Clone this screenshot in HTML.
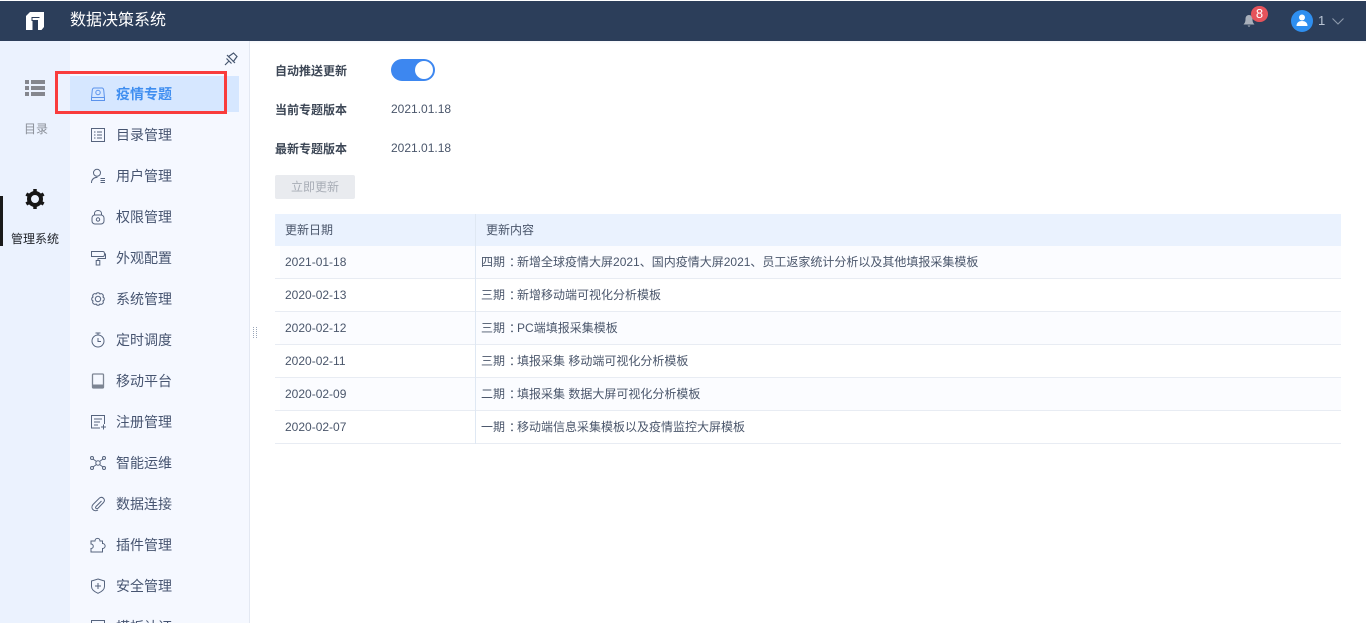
<!DOCTYPE html>
<html lang="zh"><head><meta charset="utf-8"><title>数据决策系统</title>
<style>
*{box-sizing:border-box}
html,body{margin:0;padding:0;width:1366px;height:623px;overflow:hidden;background:#fff}
#p{position:absolute;left:0;top:0;width:1366px;height:623px;overflow:hidden;background:#fff;font-family:"Liberation Sans","Noto Sans CJK SC","WenQuanYi Zen Hei",sans-serif;font-size:12px;color:#3d4d66}
.a{position:absolute;white-space:nowrap}
.m{position:absolute;left:116px;font-size:14px;line-height:20px;color:#465470;white-space:nowrap}
.ic{position:absolute;left:90px;width:16px;height:16px;fill:none;stroke:#56647e;stroke-width:1}
.d{position:absolute;left:285px;line-height:16px;color:#4a566b}
.t{position:absolute;left:481px;line-height:16px;color:#4a566b;white-space:nowrap}
.t span{display:inline-block;transform:translateX(4px)}
.l{position:absolute;left:275px;width:1066px;height:1px;background:#e8ecf3}
.r{position:absolute;left:280px;width:1061px;height:32px;background:#fbfcff}
</style></head><body><div id="p">
<div class="a" style="left:0;top:1px;width:1366px;height:40px;background:#2c3e5a"></div>
<svg class="a" style="left:26px;top:12px" width="18" height="18" viewBox="0 0 18 18"><path fill="#fff" d="M4 0H18V15L15.500 18H12V8H6.500V18H0V4Z"/><path fill="#2c3e5a" d="M5.500 5H13.500V6H6.500V9H5.500z"/></svg>
<div class="a" style="left:70px;top:10px;font-size:16px;line-height:22px;color:#fff">数据决策系统</div>
<svg class="a" style="left:1242px;top:14px" width="14" height="14" viewBox="0 0 14 14"><path fill="#a9b0bb" d="M7 1C4.500 1 3.500 3 3.500 5C3.500 8 2.800 9 1.500 10.500H12.500C11.200 9 10.500 8 10.500 5C10.500 3 9.500 1 7 1ZM5.500 11.500H8.500L7 13Z"/></svg>
<div class="a" style="left:1251px;top:6px;width:17px;height:16px;border-radius:8px;background:#e5535b;color:#fff;text-align:center;font-size:13px;line-height:16px">8</div>
<div class="a" style="left:1291px;top:10px;width:22px;height:22px;border-radius:50%;background:#2f8ff0"></div>
<svg class="a" style="left:1296px;top:14px" width="12" height="13" viewBox="0 0 12 13"><circle cx="6" cy="3.500" r="3" fill="#fff"/><path fill="#fff" d="M0.500 12C0.500 8.500 3 7 6 7S11.500 8.500 11.500 12Z"/></svg>
<div class="a" style="left:1318px;top:12px;font-size:13px;line-height:18px;color:#b9c4d4">1</div>
<svg class="a" style="left:1331px;top:17px" width="14" height="9" viewBox="0 0 14 9"><path d="M1.500 1.500L7 7L12.500 1.500" fill="none" stroke="#8d99ab" stroke-width="1.100"/></svg>

<div class="a" style="left:0;top:41px;width:70px;height:582px;background:#ebf2fe"></div>
<div class="a" style="left:70px;top:41px;width:180px;height:582px;background:#f5f8ff;border-right:1px solid #e3e8f2"></div>
<div class="a" style="left:250px;top:41px;width:1116px;height:3px;background:linear-gradient(#f6f7fa,rgba(255,255,255,0))"></div>

<svg class="a" style="left:25px;top:80px" width="20" height="17" viewBox="0 0 20 17"><path fill="#85878e" d="M0 1H4V5H0ZM6 1H20V5H6ZM0 7H4V11H0ZM6 7H20V11H6ZM0 13H4V17H0ZM6 13H20V17H6Z" transform="translate(0 -1)"/></svg>
<div class="a" style="left:24px;top:121px;line-height:16px;color:#8a8f98">目录</div>
<div class="a" style="left:0;top:196px;width:3px;height:50px;background:#1a1a1a"></div>
<svg class="a" style="left:25px;top:189px" width="20" height="20" viewBox="0 0 20 20"><circle cx="10" cy="10" r="6" fill="none" stroke="#161616" stroke-width="4"/><path stroke="#161616" stroke-width="3.500" d="M10 0V20M1.300 5L18.700 15M1.300 15L18.700 5" fill="none" stroke-dasharray="3.500 13 3.500"/></svg>
<div class="a" style="left:11px;top:231px;line-height:16px;color:#1e2127">管理系统</div>

<svg class="a" style="left:224px;top:52px" width="14" height="14" viewBox="0 0 14 14" fill="none" stroke="#45556f" stroke-width="1.200"><path d="M1 13L5 9M2.500 6.500L7.500 11.500M4 5L9.500 1L13 4.500L9 10M3 3L11 11"/></svg>

<div class="a" style="left:70px;top:76px;width:169px;height:36px;background:#d6e7ff"></div>
<div class="a" style="left:55px;top:71px;width:172px;height:43px;border:3px solid #f93c3c"></div>

<svg class="ic" style="top:86px;stroke:#5b93ec" viewBox="0 0 16 16"><path d="M4 2H12C13 2 13.500 3 13.700 4L14.500 12V14.500H1.500V12L2.300 4C2.500 3 3 2 4 2ZM1.500 11.500H14.500"/><circle cx="8" cy="6.500" r="2.200"/></svg>
<div class="m" style="top:84px;color:#3f8ef0;font-weight:bold">疫情专题</div>
<svg class="ic" style="top:127px" viewBox="0 0 16 16"><path d="M1.500 1.500H14.500V14.500H1.500ZM4 5H5.500M4 8H5.500M4 11H5.500M7 5H12M7 8H12M7 11H12"/></svg>
<div class="m" style="top:125px">目录管理</div>
<svg class="ic" style="top:168px" viewBox="0 0 16 16"><circle cx="7" cy="4.800" r="3.500"/><path d="M1.500 15C1.500 11 4 9.500 7.500 9.300M10.500 10.500H15M10.500 12.500H15M10.500 14.500H15"/></svg>
<div class="m" style="top:166px">用户管理</div>
<svg class="ic" style="top:209px" viewBox="0 0 16 16"><rect x="2" y="6" width="12" height="9" rx="3"/><path d="M4.500 6V4.500C4.500 .5 11.500 .5 11.500 4.500V6"/><circle cx="8" cy="10.500" r="1.700"/></svg>
<div class="m" style="top:207px">权限管理</div>
<svg class="ic" style="top:250px" viewBox="0 0 16 16"><path d="M1.500 1.500H13C15 1.500 15 6.500 13 6.500H1.500ZM15 4H15.500V8.500H8V10.500M6.200 10.500H9.800V15H6.200Z"/></svg>
<div class="m" style="top:248px">外观配置</div>
<svg class="ic" style="top:291px" viewBox="0 0 16 16"><path d="M13 6A2.200 2.200 0 0 1 13 10A2.200 2.200 0 0 1 10 13A2.200 2.200 0 0 1 6 13A2.200 2.200 0 0 1 3 10A2.200 2.200 0 0 1 3 6A2.200 2.200 0 0 1 6 3A2.200 2.200 0 0 1 10 3A2.200 2.200 0 0 1 13 6Z"/><circle cx="8" cy="8" r="2.700"/></svg>
<div class="m" style="top:289px">系统管理</div>
<svg class="ic" style="top:332px" viewBox="0 0 16 16"><circle cx="8" cy="9" r="6"/><path d="M5.500 1H10.500M8 1V3M8 6V9.500H11"/></svg>
<div class="m" style="top:330px">定时调度</div>
<svg class="ic" style="top:373px;stroke:#7d8593;stroke-width:1.300" viewBox="0 0 16 16"><rect x="2.500" y="1" width="11" height="14" rx="1"/><path d="M3 13H13" stroke-width="3"/></svg>
<div class="m" style="top:371px">移动平台</div>
<svg class="ic" style="top:414px" viewBox="0 0 16 16"><path d="M10 14H1.500V1.500H14.500V10M4 5H12M4 8H10M4 11H8M11 13H16M13.500 10.500V15.500"/></svg>
<div class="m" style="top:412px">注册管理</div>
<svg class="ic" style="top:455px" viewBox="0 0 16 16"><circle cx="2" cy="3" r="1.500"/><circle cx="14" cy="3" r="1.500"/><circle cx="2" cy="13" r="1.500"/><circle cx="14" cy="13" r="1.500"/><circle cx="8" cy="8" r="2.200"/><path d="M3 4L6.500 6.500M13 4L9.500 6.500M3 12L6.500 9.500M13 12L9.500 9.500"/></svg>
<div class="m" style="top:453px">智能运维</div>
<svg class="ic" style="top:496px" viewBox="0 0 16 16"><path d="M11.500 5L6 10.500C4.800 12 6.500 13.500 8 12.200L13.500 6.500C16 3.500 12.500 0 9.500 2L3 8.500C0 12 4 16.500 8 14"/></svg>
<div class="m" style="top:494px">数据连接</div>
<svg class="ic" style="top:537px" viewBox="0 0 16 16"><path d="M5 4C5 .5 10 .5 10 4H12.500V6.500C16 6.500 16 11.500 12.500 11.500V15H1V11.500C4 11.500 4 7 1 7V4Z"/></svg>
<div class="m" style="top:535px">插件管理</div>
<svg class="ic" style="top:578px" viewBox="0 0 16 16"><path d="M8 1L14.500 3V8.500C14.500 12 11 14 8 15.300C5 14 1.500 12 1.500 8.500V3ZM5 8H11M8 5V11"/></svg>
<div class="m" style="top:576px">安全管理</div>
<svg class="ic" style="top:619px" viewBox="0 0 16 16"><path d="M1.500 1.500H14.500V14.500H1.500Z"/></svg>
<div class="m" style="top:617px">模板认证</div>

<svg class="a" style="left:252px;top:327px" width="6" height="12" viewBox="0 0 6 12"><path stroke="#9aa6b8" stroke-width="1" stroke-dasharray="1 1" fill="none" d="M1.500 0V12M4.500 0V12"/></svg>

<div class="a" style="left:275px;top:63px;font-weight:bold;line-height:16px;color:#3d4756">自动推送更新</div>
<div class="a" style="left:391px;top:59px;width:44px;height:22px;border-radius:11px;background:#3d87f0"></div>
<div class="a" style="left:415px;top:61px;width:18px;height:18px;border-radius:50%;background:#fff"></div>
<div class="a" style="left:275px;top:102px;font-weight:bold;line-height:16px;color:#3d4756">当前专题版本</div>
<div class="a" style="left:391px;top:101px;line-height:16px;color:#4a566b">2021.01.18</div>
<div class="a" style="left:275px;top:141px;font-weight:bold;line-height:16px;color:#3d4756">最新专题版本</div>
<div class="a" style="left:391px;top:140px;line-height:16px;color:#4a566b">2021.01.18</div>
<div class="a" style="left:275px;top:175px;width:80px;height:24px;border-radius:2px;background:#e9ebef;color:#a8adb6;text-align:center;line-height:24px">立即更新</div>

<div class="a" style="left:275px;top:214px;width:1066px;height:32px;background:#eaf2fe"></div>
<div class="r" style="top:246px"></div><div class="r" style="top:312px"></div><div class="r" style="top:378px"></div>
<div class="l" style="top:278px"></div><div class="l" style="top:311px"></div><div class="l" style="top:344px"></div><div class="l" style="top:377px"></div><div class="l" style="top:410px"></div><div class="l" style="top:443px"></div>
<div class="a" style="left:475px;top:214px;width:1px;height:230px;background:#dfe8f3"></div>
<div class="d" style="top:222px">更新日期</div>
<div class="t" style="left:486px;top:222px">更新内容</div>
<div class="d" style="top:254px">2021-01-18</div>
<div class="t" style="top:254px">四期<span>：</span>新增全球疫情大屏2021、国内疫情大屏2021、员工返家统计分析以及其他填报采集模板</div>
<div class="d" style="top:287px">2020-02-13</div>
<div class="t" style="top:287px">三期<span>：</span>新增移动端可视化分析模板</div>
<div class="d" style="top:320px">2020-02-12</div>
<div class="t" style="top:320px">三期<span>：</span>PC端填报采集模板</div>
<div class="d" style="top:353px">2020-02-11</div>
<div class="t" style="top:353px">三期<span>：</span>填报采集 移动端可视化分析模板</div>
<div class="d" style="top:386px">2020-02-09</div>
<div class="t" style="top:386px">二期<span>：</span>填报采集 数据大屏可视化分析模板</div>
<div class="d" style="top:419px">2020-02-07</div>
<div class="t" style="top:419px">一期<span>：</span>移动端信息采集模板以及疫情监控大屏模板</div>
</div></body></html>
